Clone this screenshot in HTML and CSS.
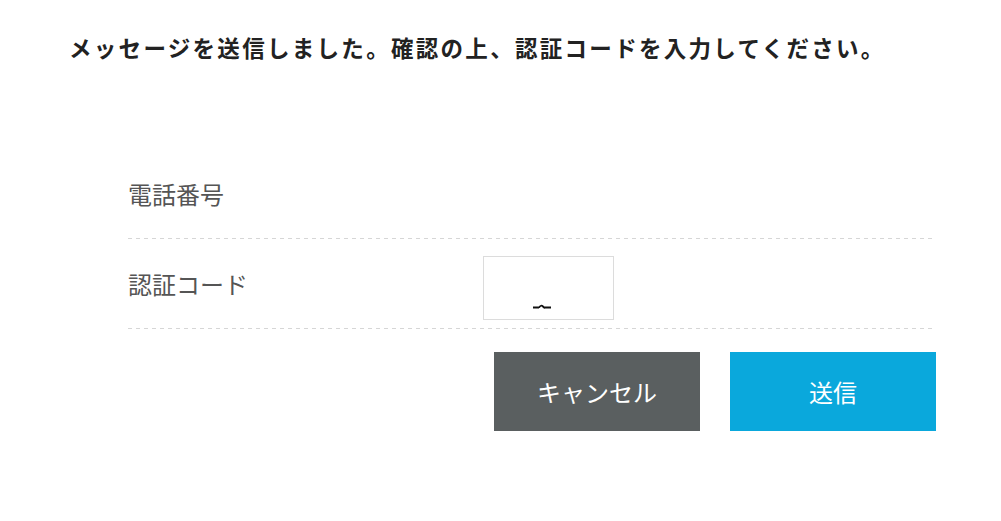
FILE: index.html
```html
<!DOCTYPE html>
<html lang="ja">
<head>
<meta charset="utf-8">
<link rel="stylesheet" href="styles.css">
</head>
<body>
<div class="page">
  <h1 class="notice">メッセージを送信しました。確認の上、認証コードを入力してください。</h1>
  <form class="form">
    <div class="row">
      <div class="label">電話番号</div>
      <div class="value"></div>
    </div>
    <div class="row">
      <div class="label">認証コード</div>
      <div class="value">
        <div class="code-input">
          <svg class="mark" width="18" height="5" viewBox="0 0 18 5"><path d="M0 3.5H6M6 3.5Q8 0.5 10 2.5T12 3.5H18" fill="none" stroke="#111" stroke-width="1.8"/></svg>
        </div>
      </div>
    </div>
    <div class="actions">
      <button type="button" class="btn btn-cancel">キャンセル</button>
      <button type="button" class="btn btn-send">送信</button>
    </div>
  </form>
</div>
</body>
</html>
```
FILE: styles.css
```css
html, body {
  margin: 0;
  padding: 0;
  background: #ffffff;
}
body {
  font-family: "Noto Sans CJK JP", "Noto Sans", sans-serif;
  color: #333;
}
.page {
  padding: 34px 0 0 69px;
}
.notice {
  margin: 0;
  font-size: 22.5px;
  font-weight: 700;
  letter-spacing: 2.3px;
  line-height: 27px;
  color: #222;
}
.form {
  margin: 88px 0 0 59px;
  width: 808px;
}
.row {
  display: grid;
  grid-template-columns: 355px 1fr;
  align-items: center;
  height: 90px;
  background: repeating-linear-gradient(to right, #d6d6d6 0 4px, transparent 4px 8px) left bottom / 100% 1px no-repeat;
}
.label {
  font-size: 24px;
  font-weight: 400;
  color: #555;
  line-height: 30px;
}
.code-input {
  position: relative;
  width: 129px;
  height: 62px;
  margin-top: 8px;
  border: 1px solid #dcdcdc;
  background: #fff;
}
.mark {
  position: absolute;
  left: 49px;
  top: 47px;
  display: block;
}
.actions {
  display: flex;
  justify-content: flex-end;
  gap: 30px;
  margin-top: 23px;
}
.btn {
  width: 206px;
  height: 79px;
  border: none;
  font-family: "Noto Sans CJK JP", "Noto Sans", sans-serif;
  font-size: 24px;
  color: #fff;
  padding: 0;
  cursor: pointer;
}
.btn-cancel {
  background: #5a5f60;
}
.btn-send {
  background: #0aa8dc;
}
```
